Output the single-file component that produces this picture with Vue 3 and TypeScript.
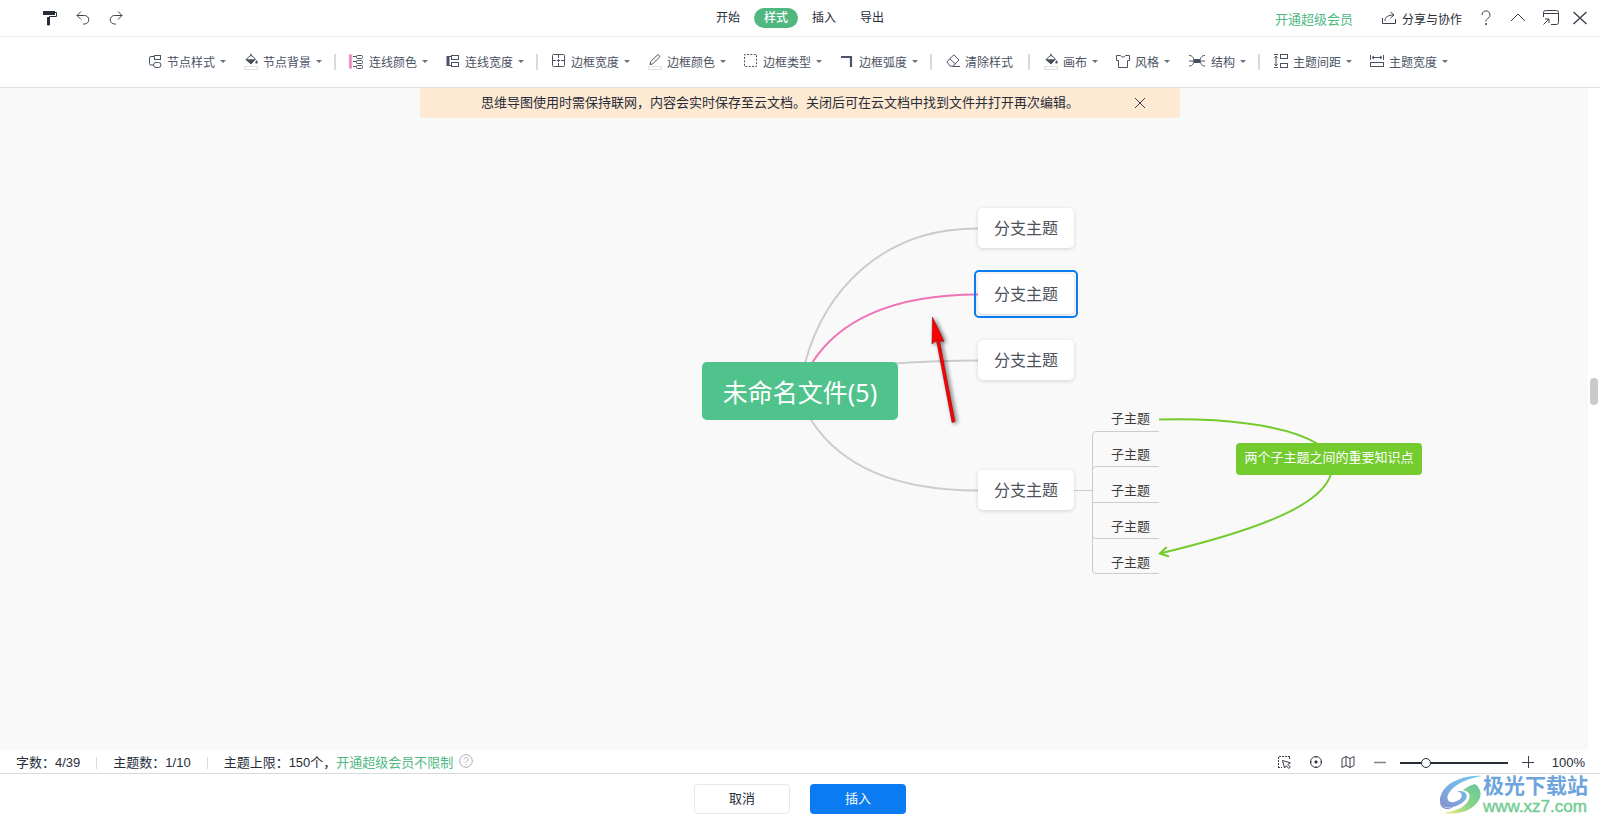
<script setup lang="ts">
import { ref } from 'vue'

interface Tool {
  label: string
  icon: string
  menu: boolean
  wide?: boolean
}

const swatch = (fill: string) =>
  `<rect x="0.5" y="13.5" width="13" height="3" fill="${fill}" stroke="#dfe0e4"/>`

const bucket = (fill: string) =>
  `<path d="M7 .5v3M2.500 6 7 2l4.500 4L7 10.500z" fill="none" stroke="#444c5c"/>
   <path d="M1 6.200h10.600L7 11.400z" fill="#444c5c" stroke="none"/>
   <path d="M12.500 7c.8 1.400 1.200 1.800 1.200 2.400a1.200 1.200 0 0 1-2.400 0c0-.6.4-1 1.200-2.400z" fill="#444c5c" stroke="none"/>` + swatch(fill)

const toolGroups: Tool[][] = [
  [
    {
      label: '节点样式',
      menu: true,
      icon: '<path d="M6 3.5H3a1.5 1.5 0 0 0-1.5 1.5v5.500a1.500 1.500 0 0 0 1.500 1.500h2.500"/><rect x="6.500" y="2.500" width="6" height="4"/><rect x="5.500" y="9.500" width="7.500" height="5" rx="2.500"/>'
    },
    { label: '节点背景', menu: true, icon: bucket('#fff') }
  ],
  [
    {
      label: '连线颜色',
      menu: true,
      icon: '<path d="M.5 1v15" stroke="#e3e3e8" stroke-width="4"/><path d="M.5 1.500v14" stroke="#ee74b5" stroke-width="2"/><path d="M3 3.500h3.500M3 8.500h3.500M3 13.500h3.500"/><rect x="6.500" y="2.500" width="6" height="3" rx="1"/><rect x="6.500" y="7.500" width="6" height="3" rx="1"/><rect x="6.500" y="12.500" width="6" height="3" rx="1"/>'
    },
    {
      label: '连线宽度',
      menu: true,
      icon: '<path d="M2 3v10" stroke-width="3"/><path d="M3 3.500h3M3 12.500h3"/><rect x="5.500" y="2.500" width="7" height="4"/><rect x="5.500" y="9.500" width="7" height="4"/>'
    }
  ],
  [
    {
      label: '边框宽度',
      menu: true,
      icon: '<rect x="0.500" y="1.500" width="12" height="12" rx="1"/><path d="M6.500 2v3M6.500 6v3M6.500 10v3M1 7.500h3M5 7.500h3M9 7.500h3"/>'
    },
    {
      label: '边框颜色',
      menu: true,
      icon: '<path d="m2 11.500.6-2.800 6.700-6.600a1.200 1.200 0 0 1 1.700 0l.4.4a1.200 1.200 0 0 1 0 1.700l-6.600 6.700z"/>' + swatch('#fff')
    },
    {
      label: '边框类型',
      menu: true,
      icon: '<rect x="0.500" y="1.500" width="12" height="12" stroke-dasharray="2 1.430" stroke-dashoffset="1"/>'
    },
    { label: '边框弧度', menu: true, icon: '<path d="M1 4h10v10" stroke-width="2.200"/>' }
  ],
  [
    {
      label: '清除样式',
      menu: false,
      icon: '<path d="M7.800 1.800 13 7l-6 6.200H4.200L.8 9z"/><path d="m3.800 5.800 5.600 5.200M7 13.500h7"/>'
    }
  ],
  [
    { label: '画布', menu: true, icon: bucket('#f9f9f9') },
    {
      label: '风格',
      menu: true,
      icon: '<path d="M4.500 2.500c.8 2 4.200 2 5 0h4v5h-2v7h-9v-7h-2v-5z" stroke-linejoin="round"/>'
    },
    {
      label: '结构',
      menu: true,
      wide: true,
      icon: '<rect x="6" y="6.500" width="6" height="3" fill="#444c5c"/><path d="M1 2.500c4 0 4 2.500 5.500 5C5 10.500 5 13 1 13M1 8h5M17 2.500c-4 0-4 2.500-5.500 5 1.500 3 1.500 5.500 5.500 5.500M12 8h5"/>'
    }
  ],
  [
    {
      label: '主题间距',
      menu: true,
      icon: '<path d="M0 1.500h4M0 14.500h4M2 3v10M.5 5 2 3l1.500 2M.5 11 2 13l1.500-2"/><rect x="6.500" y="1.500" width="7" height="4"/><rect x="6.500" y="10.500" width="7" height="4"/>'
    },
    {
      label: '主题宽度',
      menu: true,
      icon: '<path d="M.5 2v5M13.500 2v5M2 4.500h10M4 3 2 4.500 4 6M10 3l2 1.500L10 6"/><rect x="0.500" y="9.500" width="13" height="4"/>'
    }
  ]
]

const tabs = ['开始', '样式', '插入', '导出']
const activeTab = ref('样式')
const zoom = ref(22)
const noticeOpen = ref(true)
const branches = ['a', 'b', 'c', 'd']
const selected = ref('b')
</script>

<template>
  <div class="app">
    <header class="topbar">
      <div class="history">
        <button aria-label="格式刷">
          <svg width="16" height="16" viewBox="0 0 16 16">
            <path d="M1 1h12v4H1z" fill="#262d38" />
            <path d="M13 2.500h1.500v4h-7V15" fill="none" stroke="#262d38" />
            <path d="M5.500 7.500h2V15h-2z" fill="#262d38" stroke="#262d38" />
          </svg>
        </button>
        <button aria-label="撤销">
          <svg width="16" height="16" viewBox="0 0 16 16" class="line">
            <path d="M6 1.500 2 5.500l4 4M2 5.500h7.500a4 4 0 0 1 0 8.500H8" />
          </svg>
        </button>
        <button aria-label="重做">
          <svg width="16" height="16" viewBox="0 0 16 16" class="line">
            <path d="m10 1.500 4 4-4 4M14 5.500H6.500a4 4 0 0 0 0 8.500H8" />
          </svg>
        </button>
      </div>
      <nav class="tabs">
        <button v-for="t in tabs" :key="t" :class="{ active: t === activeTab }" @click="activeTab = t">{{ t }}</button>
      </nav>
      <div class="account">
        <a href="#" class="vip">开通超级会员</a>
        <button class="share">
          <svg width="16" height="16" viewBox="0 0 16 16" class="line">
            <path d="M1.500 8v5.500h13V9M4 11c0-4 3-6 8.500-6M9.500 2l3.500 3-3.500 3" />
          </svg>
          分享与协作
        </button>
        <button aria-label="帮助">
          <svg width="16" height="16" viewBox="0 0 16 16" class="line">
            <path d="M4 5a4 4 0 1 1 6.500 3C8.800 9.200 8 9.500 8 11.500" />
            <path d="M7.200 14h1.600" stroke-width="2" />
          </svg>
        </button>
        <button aria-label="收起">
          <svg width="16" height="16" viewBox="0 0 16 16" class="line"><path d="m1 11 7-7 7 7" /></svg>
        </button>
        <button aria-label="弹出窗口">
          <svg width="18" height="16" viewBox="0 0 18 16" class="line">
            <path d="M1.500 7V2.500a2 2 0 0 1 2-2h11a2 2 0 0 1 2 2v10a2 2 0 0 1-2 2H9M1.500 3.500h15M1.500 14.500 7 9M3 9h4v4" />
          </svg>
        </button>
        <button class="close" aria-label="关闭">
          <svg width="16" height="16" viewBox="0 0 16 16" class="line"><path d="m1.500 2 13 12M14.500 2l-13 12" stroke-width="1.400" /></svg>
        </button>
      </div>
    </header>

    <div class="toolbar" role="toolbar">
      <div v-for="(group, i) in toolGroups" :key="i" class="group">
        <button v-for="t in group" :key="t.label" class="tool" :class="{ plain: !t.menu }">
          <svg
            :width="t.wide ? 20 : 16"
            height="18"
            :viewBox="t.wide ? '0 0 20 18' : '0 0 16 18'"
            fill="none"
            stroke="#4a5263"
            v-html="t.icon"
          />
          <span>{{ t.label }}</span>
          <i v-if="t.menu" class="caret" />
        </button>
      </div>
    </div>

    <main class="canvas">
      <div v-if="noticeOpen" class="notice">
        <p>思维导图使用时需保持联网，内容会实时保存至云文档。关闭后可在云文档中找到文件并打开再次编辑。</p>
        <button aria-label="关闭提示" @click="noticeOpen = false">
          <svg width="12" height="12" viewBox="0 0 12 12" class="line"><path d="m1 1 10 10M11 1 1 11" /></svg>
        </button>
      </div>

      <div class="map">
        <svg class="links" width="740" height="380" viewBox="702 208 740 380" fill="none">
          <g stroke="#cccccc" stroke-width="2">
            <path d="M805 363C824 293 880 228 978 228.500" />
            <path d="M890 363.800C925 361.500 950 360.500 978 360.500" />
            <path d="M811 420C840 465 895 490.500 978 490.500" />
          </g>
          <path d="M812 363C838 322 890 294.500 978 294.500" stroke="#ee74b5" stroke-width="2" />
          <g stroke="#cccccc">
            <path d="M1074 490.500h18.500M1159 431.500h-63a3.500 3.500 0 0 0-3.500 3.500v135a3.500 3.500 0 0 0 3.500 3.500h63" />
            <path d="M1159 466.500h-63a3.500 3.500 0 0 0-3.500 3.500M1159 502.500h-66.500M1159 538.500h-63a3.500 3.500 0 0 1-3.500-3.500" />
          </g>
          <g stroke="#73cb2e" stroke-width="2">
            <path d="M1159 419.500C1220 418 1285 424 1318 444" />
            <path d="M1331 474C1322 503 1270 527 1160 553.500" />
            <path d="M1166.700 547 1160 553.500l9 3" />
          </g>
        </svg>

        <div class="root">未命名文件(5)</div>
        <div
          v-for="b in branches"
          :key="b"
          class="branch"
          :class="[b, { selected: b === selected }]"
          @click="selected = b"
        >分支主题</div>
        <ul class="children">
          <li v-for="n in 5" :key="n">子主题</li>
        </ul>
        <div class="relation">两个子主题之间的重要知识点</div>

        <svg class="pointer" width="40" height="124" viewBox="924 308 40 124">
          <path d="M932.500 317 944 341.500l-4.500-1 15.500 81-3 1-15.500-82-4.500 3.500z" fill="#fe0000" stroke="#7c0000" stroke-width=".5" />
        </svg>
      </div>

      <div class="scrollbar"><i /></div>
    </main>

    <div class="status">
      <span>字数：4/39</span>
      <span>主题数：1/10</span>
      <span>主题上限：150个，<a href="#">开通超级会员不限制</a></span>
      <svg class="hint" width="14" height="14" viewBox="0 0 14 14" fill="none" stroke="#a9afb9">
        <circle cx="7" cy="7" r="6.300" />
        <path d="M5 5.600a2 2 0 1 1 3.200 1.500C7.300 7.700 7 7.900 7 8.800M7 10v1" />
      </svg>
      <div class="view">
        <button aria-label="框选">
          <svg width="16" height="16" viewBox="0 0 16 16" class="line">
            <path d="M2.500 14V2.500H14M13.500 3v3M2 13.500h4" stroke-dasharray="2 1" />
            <path d="m6.500 6.500 2 7.500 1.800-2.300 2.500 2.800 1.500-1.500-2.500-2.700 2.500-1.500z" />
          </svg>
        </button>
        <button aria-label="居中">
          <svg width="16" height="16" viewBox="0 0 16 16" class="line">
            <circle cx="8" cy="8" r="5.500" />
            <circle cx="8" cy="8" r="1.200" fill="#262d38" />
            <path d="M8 2v2M8 12v2M2 8h2M12 8h2" />
          </svg>
        </button>
        <button aria-label="缩略图">
          <svg width="16" height="16" viewBox="0 0 16 16" class="line">
            <path d="M2 4.500 6 2.500l4 2 4-2v9l-4 2-4-2-4 2zM6 2.500v9M10 4.500v9" />
          </svg>
        </button>
        <button aria-label="缩小">
          <svg width="14" height="14" viewBox="0 0 14 14" stroke="#7d828a"><path d="M1 7.500h12" stroke-width="1.500" /></svg>
        </button>
        <input v-model="zoom" type="range" min="0" max="100" aria-label="缩放" />
        <button aria-label="放大">
          <svg width="14" height="14" viewBox="0 0 14 14" class="line"><path d="M1 7.500h12M7.500 1v12" /></svg>
        </button>
        <span class="percent">100%</span>
      </div>
    </div>

    <footer class="actions">
      <button class="cancel">取消</button>
      <button class="insert">插入</button>
    </footer>

    <div class="mark">
      <svg width="44" height="40" viewBox="0 0 44 40">
        <defs>
          <linearGradient id="swirlBlue" x1="0" y1="1" x2="1" y2="0">
            <stop offset="0" stop-color="#8490cf" />
            <stop offset=".5" stop-color="#78b4e4" />
            <stop offset="1" stop-color="#6cc8f2" />
          </linearGradient>
          <linearGradient id="swirlGreen" x1="0" y1="1" x2="1" y2="0">
            <stop offset="0" stop-color="#f3ee7a" />
            <stop offset=".45" stop-color="#8fd488" />
            <stop offset="1" stop-color="#62c79a" />
          </linearGradient>
        </defs>
        <path d="M43 1C28 0 12 5 4.500 15-1 23 0 31 6 32c7 2 18-3 21-8 3-6-4-10-10-7 5-1 7 3 5 6-3 4-11 6-13 2C6 18 18 5 43 1z" fill="url(#swirlBlue)" />
        <path d="M1 27c1 5 7 7 13 5-5 4-13 2-13-5z" fill="#7d8fd0" />
        <path d="M36 9c7 5 8 14 0 21-7 7-20 10-31 8 13-2 23-7 25-14 2-5-1-8-6-9 4-3 8-5 12-6z" fill="url(#swirlGreen)" />
      </svg>
      <div>
        <strong>极光下载站</strong>
        <span>www.xz7.com</span>
      </div>
    </div>
  </div>
</template>

<style>
body {
  background: #fff;
}
</style>

<style scoped>
.app {
  display: flex;
  flex-direction: column;
  height: 100vh;
  position: relative;
  overflow: hidden;
  font-family: "Liberation Sans", "Noto Sans CJK SC", sans-serif;
  font-size: 13px;
  color: #262d38;
  background: #fff;
}
button {
  border: 0;
  padding: 0;
  background: none;
  font: inherit;
  color: inherit;
  cursor: pointer;
}
svg {
  display: block;
  flex: none;
  overflow: visible;
}
a {
  color: #4fb883;
  text-decoration: none;
}
.line {
  fill: none;
  stroke: #3a414c;
}

.topbar {
  display: grid;
  grid-template-columns: 1fr auto 1fr;
  align-items: center;
  height: 36px;
  flex: none;
  border-bottom: 1px solid #ececec;
}
.history {
  display: flex;
  gap: 17px;
  padding-left: 42px;
}
.tabs {
  display: flex;
  gap: 4px;
  font-size: 12px;
}
.tabs button {
  width: 44px;
  height: 20px;
  border-radius: 10px;
  line-height: 20px;
}
.tabs .active {
  background: #50b780;
  color: #fff;
  font-weight: 500;
}
.account {
  display: flex;
  justify-content: flex-end;
  align-items: center;
  gap: 16px;
  padding-right: 12px;
}
.vip {
  margin-right: 12px;
}
.share {
  display: flex;
  align-items: center;
  gap: 5px;
  font-size: 12px;
}
.close {
  margin-left: -4px;
}

.toolbar {
  display: flex;
  justify-content: center;
  align-items: center;
  height: 50px;
  flex: none;
  padding-right: 4px;
  border-bottom: 1px solid #dfdfdf;
  font-size: 12px;
  color: #4a5263;
}
.group {
  display: flex;
  align-items: center;
  gap: 18px;
}
.group + .group::before {
  content: "";
  width: 2px;
  height: 16px;
  margin: 0 -4px 0 12px;
  background: #d9dade;
}
.tool {
  display: flex;
  align-items: center;
  gap: 3px;
  line-height: 18px;
  white-space: nowrap;
}
.tool span {
  padding-top: 2px;
}
.plain {
  padding-right: 3px;
}
.caret {
  margin: 0 0 1px 2px;
  border: 3px solid transparent;
  border-top-color: #6d7480;
  border-bottom: 0;
}

.canvas {
  position: relative;
  flex: 1;
  min-height: 0;
  overflow: hidden;
  background: #f9f9f9;
}
.notice {
  display: flex;
  align-items: center;
  box-sizing: border-box;
  width: 760px;
  max-width: 100%;
  height: 30px;
  margin: 0 auto;
  padding: 0 34px 0 61px;
  border-radius: 0 0 4px 4px;
  background: #fee9d3;
}
.notice p {
  flex: 1;
  margin: 0;
  padding-bottom: 3px;
  white-space: nowrap;
}

.map {
  position: absolute;
  left: calc(50% - 98px);
  top: 120px;
  width: 740px;
  height: 380px;
}
.links,
.root,
.branch,
.children,
.relation,
.pointer {
  position: absolute;
}
.links {
  left: 0;
  top: 0;
}
.root {
  left: 0;
  top: 154px;
  width: 196px;
  height: 58px;
  border-radius: 5px;
  background: #50c28b;
  color: #fff;
  font: 25px/60px "Noto Sans", "Noto Sans CJK SC", sans-serif;
  text-align: center;
}
.branch {
  left: 276px;
  width: 96px;
  height: 40px;
  border-radius: 5px;
  background: #fff;
  box-shadow: 0 1px 4px rgba(0, 0, 0, 0.15);
  color: #4c525c;
  font-size: 16px;
  line-height: 42px;
  text-align: center;
}
.a {
  top: 0;
}
.b {
  top: 66px;
}
.c {
  top: 132px;
}
.d {
  top: 262px;
}
.selected::after {
  content: "";
  position: absolute;
  inset: -4px;
  border: 2px solid #0a7bf0;
  border-radius: 5px;
}
.children {
  left: 409px;
  top: 199px;
  margin: 0;
  padding: 0;
  list-style: none;
  display: grid;
  gap: 12px;
  color: #3c3c3c;
}
.children li {
  line-height: 24px;
}
.relation {
  left: 534px;
  top: 235px;
  width: 186px;
  height: 32px;
  border-radius: 4px;
  background: #73cb2e;
  color: #fff;
  line-height: 30px;
  text-align: center;
}
.pointer {
  left: 222px;
  top: 100px;
  filter: drop-shadow(2px 1px 2px rgba(0, 0, 0, 0.6));
}

.scrollbar {
  position: absolute;
  right: 0;
  top: 0;
  bottom: 0;
  width: 12px;
  display: flex;
  align-items: center;
  justify-content: center;
  background: #fff;
}
.scrollbar i {
  width: 8px;
  height: 27px;
  margin-bottom: 56px;
  border-radius: 4px;
  background: #cacaca;
}

.status {
  display: flex;
  align-items: center;
  height: 23px;
  flex: none;
  padding: 0 15px 0 16px;
  border-bottom: 1px solid #d9d9d9;
  line-height: 22px;
  white-space: nowrap;
}
.status > span {
  display: flex;
  align-items: center;
  padding-top: 2px;
}
.status > span + span::before {
  content: "";
  width: 1px;
  height: 12px;
  margin: 0 16px;
  background: #dcdcdc;
}
.hint {
  margin: 0 0 1px 6px;
}
.view {
  display: flex;
  align-items: center;
  gap: 16px;
  margin-left: auto;
}
.view button:nth-of-type(4) {
  margin-left: 1px;
}
.view input {
  appearance: none;
  width: 108px;
  height: 12px;
  margin: 2px -3px 0;
  background: linear-gradient(#262d38, #262d38) center / 100% 2px no-repeat;
}
.view input::-webkit-slider-thumb {
  appearance: none;
  box-sizing: border-box;
  width: 10px;
  height: 10px;
  border: 1px solid #262d38;
  border-radius: 50%;
  background: #fff;
}
.percent {
  margin-left: 1px;
  padding-top: 2px;
}

.actions {
  display: flex;
  justify-content: center;
  align-items: center;
  gap: 20px;
  height: 50px;
  flex: none;
}
.actions button {
  box-sizing: border-box;
  width: 96px;
  height: 30px;
  padding-bottom: 4px;
  border-radius: 4px;
}
.cancel {
  border: 1px solid #e6e8ee;
}
.insert {
  background: #0a7bf0;
  color: #fff;
}

.mark {
  position: absolute;
  right: 12px;
  bottom: 8px;
  display: flex;
  align-items: center;
  pointer-events: none;
}
.mark div {
  display: flex;
  flex-direction: column;
}
.mark strong {
  font-size: 21px;
  line-height: 24px;
  color: #6ea4dc;
}
.mark span {
  font-size: 17px;
  line-height: 18px;
  color: #6fcb90;
  -webkit-text-stroke: 1px #6fcb9066;
}
</style>
